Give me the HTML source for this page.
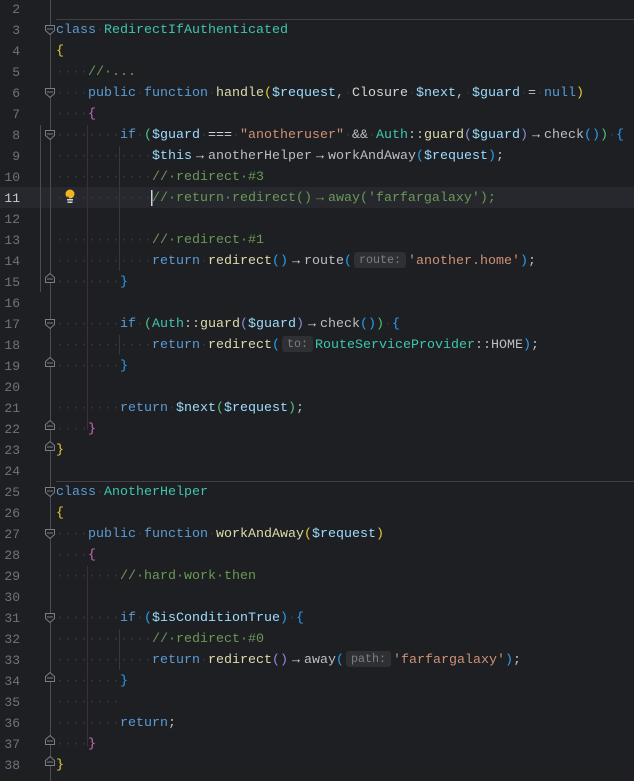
<!DOCTYPE html>
<html><head><meta charset="utf-8"><style>
html,body{margin:0;padding:0;background:#1e1f22;width:634px;height:781px;overflow:hidden}
body{position:relative;font-family:"Liberation Mono","DejaVu Sans Mono",monospace;font-size:13.33px}
.row{position:absolute;left:0;width:634px;height:21px;line-height:21px;white-space:pre}
.n{position:absolute;left:0;width:20px;text-align:right;color:#6f737a;font-size:13px}
.c{position:absolute;left:56px;color:#bcbec4}
.w{color:#34363b}
.k{color:#5a9bd5}.t{color:#3fc5ae}.f{color:#dcdcaa}.v{color:#9cdcfe}.s{color:#ce9178}.m{color:#6a9955}
.y{color:#e8c93a}.p{color:#c86bb8}.b{color:#2a9ff0}.g{color:#4fc37e}.pu{color:#8c8ce0}.o{color:#d4d4d4}
.a{display:inline-block;width:16px;text-align:center;color:#d4d4d4}
.eq{color:#d4d4d4;letter-spacing:0}
.h{display:inline-block;background:#2f3034;color:#7a7e85;font-size:11.67px;padding:0 5px;margin:0 2px;border-radius:3px;line-height:16px;vertical-align:1px}
.vl{position:absolute;width:1px}
</style></head><body>
<div style="position:absolute;left:0;top:187px;width:634px;height:21px;background:#26282e"></div>
<div class="vl" style="left:50px;top:0;height:781px;background:#4a4c52"></div>
<div class="vl" style="left:40px;top:125px;height:167px;background:#4a4c52"></div>
<div style="position:absolute;left:56px;top:19px;width:578px;height:1px;background:#3e4046"></div>
<div style="position:absolute;left:56px;top:481px;width:578px;height:1px;background:#3e4046"></div>
<div class="vl" style="left:87px;top:125px;height:305px;background:#3d2f35"></div>
<div class="vl" style="left:87px;top:566px;height:180px;background:#3d2f35"></div>
<div class="vl" style="left:119px;top:146px;height:125px;background:#2c3a4a"></div>
<div class="vl" style="left:119px;top:335px;height:20px;background:#2c3a4a"></div>
<div class="vl" style="left:119px;top:629px;height:41px;background:#2c3a4a"></div>
<svg style="position:absolute;left:0;top:0" width="634" height="781">
<g fill="#1e1f22" stroke="#7a7d84" stroke-width="1">
<path d="M45.5 25.5h9v5l-4.5 4-4.5-4z"/><path d="M47 29h6"/>
<path d="M45.5 88.5h9v5l-4.5 4-4.5-4z"/><path d="M47 92h6"/>
<path d="M45.5 130.5h9v5l-4.5 4-4.5-4z"/><path d="M47 134h6"/>
<path d="M45.5 277.5l4.5-4 4.5 4v5h-9z"/><path d="M47 279h6"/>
<path d="M45.5 319.5h9v5l-4.5 4-4.5-4z"/><path d="M47 323h6"/>
<path d="M45.5 361.5l4.5-4 4.5 4v5h-9z"/><path d="M47 363h6"/>
<path d="M45.5 424.5l4.5-4 4.5 4v5h-9z"/><path d="M47 426h6"/>
<path d="M45.5 445.5l4.5-4 4.5 4v5h-9z"/><path d="M47 447h6"/>
<path d="M45.5 487.5h9v5l-4.5 4-4.5-4z"/><path d="M47 491h6"/>
<path d="M45.5 529.5h9v5l-4.5 4-4.5-4z"/><path d="M47 533h6"/>
<path d="M45.5 613.5h9v5l-4.5 4-4.5-4z"/><path d="M47 617h6"/>
<path d="M45.5 676.5l4.5-4 4.5 4v5h-9z"/><path d="M47 678h6"/>
<path d="M45.5 739.5l4.5-4 4.5 4v5h-9z"/><path d="M47 741h6"/>
<path d="M45.5 760.5l4.5-4 4.5 4v5h-9z"/><path d="M47 762h6"/>
</g>
<circle cx="70" cy="194" r="4.5" fill="#f2b51f"/><rect x="67" y="199" width="6" height="1.5" fill="#cfd2d6"/><rect x="67.5" y="201.5" width="5" height="1.5" fill="#cfd2d6"/>
<rect x="151" y="190" width="1.5" height="16" fill="#cfd2d6"/>
</svg>
<div class="row" style="top:-1px"><span class="n">2</span></div>
<div class="row" style="top:20px"><span class="n">3</span><span class="c"><span class="k">class</span><span class="w">·</span><span class="t">RedirectIfAuthenticated</span></span></div>
<div class="row" style="top:41px"><span class="n">4</span><span class="c"><span class="y">{</span></span></div>
<div class="row" style="top:62px"><span class="n">5</span><span class="c"><span class="w">····</span><span class="m">//·...</span></span></div>
<div class="row" style="top:83px"><span class="n">6</span><span class="c"><span class="w">····</span><span class="k">public</span><span class="w">·</span><span class="k">function</span><span class="w">·</span><span class="f">handle</span><span class="y">(</span><span class="v">$request</span>,<span class="w">·</span><span class="o">Closure</span><span class="w">·</span><span class="v">$next</span>,<span class="w">·</span><span class="v">$guard</span><span class="w">·</span>=<span class="w">·</span><span class="k">null</span><span class="y">)</span></span></div>
<div class="row" style="top:104px"><span class="n">7</span><span class="c"><span class="w">····</span><span class="p">{</span></span></div>
<div class="row" style="top:125px"><span class="n">8</span><span class="c"><span class="w">········</span><span class="k">if</span><span class="w">·</span><span class="g">(</span><span class="v">$guard</span><span class="w">·</span><span class="eq">===</span><span class="w">·</span><span class="s">"anotheruser"</span><span class="w">·</span>&amp;&amp;<span class="w">·</span><span class="t">Auth</span>::<span class="f">guard</span><span class="pu">(</span><span class="v">$guard</span><span class="pu">)</span><span class="a">→</span>check<span class="b">()</span><span class="g">)</span><span class="w">·</span><span class="b">{</span></span></div>
<div class="row" style="top:146px"><span class="n">9</span><span class="c"><span class="w">············</span><span class="v">$this</span><span class="a">→</span>anotherHelper<span class="a">→</span>workAndAway<span class="b">(</span><span class="v">$request</span><span class="b">)</span>;</span></div>
<div class="row" style="top:167px"><span class="n">10</span><span class="c"><span class="w">············</span><span class="m">//·redirect·#3</span></span></div>
<div class="row" style="top:188px"><span class="n" style="color:#c9ccd2">11</span><span class="c"><span class="w">············</span><span class="m">//·return·redirect()<span class="a" style="color:#6a9955">→</span>away('farfargalaxy');</span></span></div>
<div class="row" style="top:209px"><span class="n">12</span></div>
<div class="row" style="top:230px"><span class="n">13</span><span class="c"><span class="w">············</span><span class="m">//·redirect·#1</span></span></div>
<div class="row" style="top:251px"><span class="n">14</span><span class="c"><span class="w">············</span><span class="k">return</span><span class="w">·</span><span class="f">redirect</span><span class="b">()</span><span class="a">→</span>route<span class="b">(</span><span class="h">route:</span><span class="s">'another.home'</span><span class="b">)</span>;</span></div>
<div class="row" style="top:272px"><span class="n">15</span><span class="c"><span class="w">········</span><span class="b">}</span></span></div>
<div class="row" style="top:293px"><span class="n">16</span></div>
<div class="row" style="top:314px"><span class="n">17</span><span class="c"><span class="w">········</span><span class="k">if</span><span class="w">·</span><span class="g">(</span><span class="t">Auth</span>::<span class="f">guard</span><span class="pu">(</span><span class="v">$guard</span><span class="pu">)</span><span class="a">→</span>check<span class="b">()</span><span class="g">)</span><span class="w">·</span><span class="b">{</span></span></div>
<div class="row" style="top:335px"><span class="n">18</span><span class="c"><span class="w">············</span><span class="k">return</span><span class="w">·</span><span class="f">redirect</span><span class="b">(</span><span class="h">to:</span><span class="t">RouteServiceProvider</span>::HOME<span class="b">)</span>;</span></div>
<div class="row" style="top:356px"><span class="n">19</span><span class="c"><span class="w">········</span><span class="b">}</span></span></div>
<div class="row" style="top:377px"><span class="n">20</span></div>
<div class="row" style="top:398px"><span class="n">21</span><span class="c"><span class="w">········</span><span class="k">return</span><span class="w">·</span><span class="v">$next</span><span class="g">(</span><span class="v">$request</span><span class="g">)</span>;</span></div>
<div class="row" style="top:419px"><span class="n">22</span><span class="c"><span class="w">····</span><span class="p">}</span></span></div>
<div class="row" style="top:440px"><span class="n">23</span><span class="c"><span class="y">}</span></span></div>
<div class="row" style="top:461px"><span class="n">24</span></div>
<div class="row" style="top:482px"><span class="n">25</span><span class="c"><span class="k">class</span><span class="w">·</span><span class="t">AnotherHelper</span></span></div>
<div class="row" style="top:503px"><span class="n">26</span><span class="c"><span class="y">{</span></span></div>
<div class="row" style="top:524px"><span class="n">27</span><span class="c"><span class="w">····</span><span class="k">public</span><span class="w">·</span><span class="k">function</span><span class="w">·</span><span class="f">workAndAway</span><span class="y">(</span><span class="v">$request</span><span class="y">)</span></span></div>
<div class="row" style="top:545px"><span class="n">28</span><span class="c"><span class="w">····</span><span class="p">{</span></span></div>
<div class="row" style="top:566px"><span class="n">29</span><span class="c"><span class="w">········</span><span class="m">//·hard·work·then</span></span></div>
<div class="row" style="top:587px"><span class="n">30</span></div>
<div class="row" style="top:608px"><span class="n">31</span><span class="c"><span class="w">········</span><span class="k">if</span><span class="w">·</span><span class="b">(</span><span class="v">$isConditionTrue</span><span class="b">)</span><span class="w">·</span><span class="b">{</span></span></div>
<div class="row" style="top:629px"><span class="n">32</span><span class="c"><span class="w">············</span><span class="m">//·redirect·#0</span></span></div>
<div class="row" style="top:650px"><span class="n">33</span><span class="c"><span class="w">············</span><span class="k">return</span><span class="w">·</span><span class="f">redirect</span><span class="pu">()</span><span class="a">→</span>away<span class="b">(</span><span class="h">path:</span><span class="s">'farfargalaxy'</span><span class="b">)</span>;</span></div>
<div class="row" style="top:671px"><span class="n">34</span><span class="c"><span class="w">········</span><span class="b">}</span></span></div>
<div class="row" style="top:692px"><span class="n">35</span><span class="c"><span class="w">········</span></span></div>
<div class="row" style="top:713px"><span class="n">36</span><span class="c"><span class="w">········</span><span class="k">return</span>;</span></div>
<div class="row" style="top:734px"><span class="n">37</span><span class="c"><span class="w">····</span><span class="p">}</span></span></div>
<div class="row" style="top:755px"><span class="n">38</span><span class="c"><span class="y">}</span></span></div>
</body></html>
